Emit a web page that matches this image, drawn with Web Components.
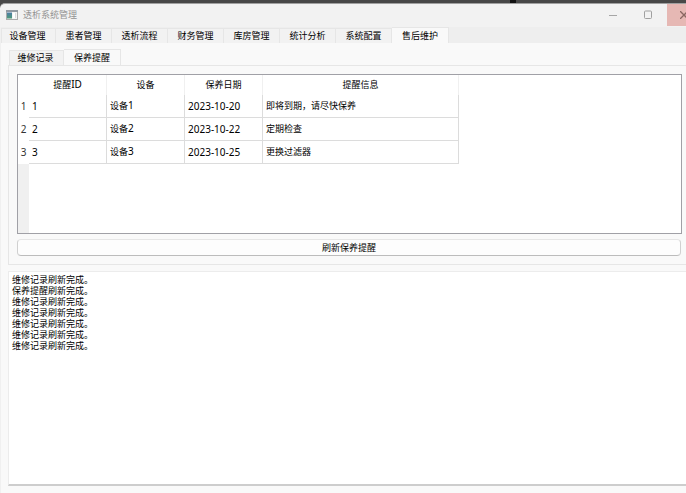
<!DOCTYPE html>
<html lang="zh-CN">
<head>
<meta charset="utf-8">
<title>透析系统管理</title>
<style>
html, body { height: 100%; margin: 0; }
body { background: #484848; overflow: hidden; font: 9px/12px "Noto Sans", "Noto Sans CJK SC", sans-serif; color: #000; }
</style>
</head>
<body>
<app-window></app-window>
<script>
function define(name, html, setup) {
  const template = document.createElement('template');
  template.innerHTML = '<style>*{box-sizing:border-box}button{font:inherit;color:inherit}</style>' + html;
  customElements.define(name, class extends HTMLElement {
    constructor() {
      super();
      this.attachShadow({ mode: 'open' }).append(template.content.cloneNode(true));
    }
    connectedCallback() { if (setup) setup(this, this.shadowRoot); }
  });
}

define('title-bar', `
<style>
:host { display: flex; height: 24px; flex: none; background: #f2f2f2; color: #929292; border-top: 1px solid #a0a0a0; border-top-left-radius: 5px; }
.name { display: flex; align-items: center; gap: 5px; padding: 0 0 2px 6px; flex: 1; font-size: 9px; }
button { border: 0; padding: 0 0 2px; background: none; width: 35px; display: flex; align-items: center; justify-content: center; }
.close { width: 19px; height: 22px; margin-left: 2px; padding: 0; background: #e6b8b4; justify-content: flex-end; overflow: hidden; }
svg { display: block; flex: none; }
</style>
<div class="name">
<svg width="12" height="10" viewBox="0 0 12 10"><defs><linearGradient id="g" x2="0" y2="1"><stop stop-color="#4c7ba5"/><stop offset="1" stop-color="#4d9a78"/></linearGradient></defs><rect x=".5" y=".5" width="11" height="9" fill="#f4f4f4" stroke="#aaa"/><path d="M0 1h12" stroke="#929aa2" stroke-width="2"/><path d="M1 2.500h5v6h-5z" fill="url(#g)"/><path d="M7 3h2v5h-2z" fill="#fff"/><path d="M9.500 3v5" stroke="#d8dce0"/></svg>
<span>透析系统管理</span></div>
<button aria-label="最小化"><svg width="8" height="8"><path d="M0 4.500h8" stroke="#a6a6a6"/></svg></button>
<button aria-label="最大化"><svg width="8" height="9"><rect x=".5" y="1" width="7" height="7.500" rx="1" fill="none" stroke="#a0a0a0"/></svg></button>
<button class="close" aria-label="关闭"><svg width="6" height="8"><path d="M0 0l8 8M8 0l-8 8" stroke="#8a6662" stroke-width="1.300"/></svg></button>
`);

define('tab-strip', `
<style>
:host { display: flex; align-items: flex-end; flex: none; height: 16px; }
</style><slot></slot>
`);

define('tab-item', `
<style>
:host { display: block; flex: 0 0 56px; height: 15px; }
:host([first]) { flex-basis: 55px; }
:host([selected]) { height: 16px; flex-basis: 57px; }
button { width: 100%; height: 100%; padding: 0; border: 1px solid #e6e6e6; border-left-width: 0; border-bottom: 0; background: #f2f2f2; text-align: center; line-height: 14px; }
:host([first]) button { border-left-width: 1px; padding-right: 2px; }
:host([selected]) button { background: #f9f9f9; }
</style><button role="tab"><slot></slot></button>
`, (host, root) => root.querySelector('button').setAttribute('aria-selected', host.hasAttribute('selected')));

define('reminder-table', `
<style>
:host { display: flex; flex-direction: column; height: 160px; background: #fff; border: 1px solid #a0a0a6; }
table { table-layout: fixed; width: 441px; border-collapse: separate; border-spacing: 0; flex: none; }
th, td { padding: 0 0 1px; font-weight: 400; height: 23px; }
thead th { height: 20px; text-align: center; border-right: 1px solid #f0f0f0; }
thead th:first-child { border: 0; }
tbody th { text-align: center; color: #333; font-size: 10px; }
td { padding-left: 3px; text-align: left; border: solid #dcdcdc; border-width: 0 1px 1px 0; }
td.num { font-size: 10px; }
.n { font-size: 10px; }
.rest { flex: 1; width: 11px; background: #f0f0f0; }
</style>
<table>
<colgroup><col style="width:11px"><col style="width:78px"><col style="width:78px"><col style="width:78px"><col style="width:196px"></colgroup>
<thead><tr><th></th><th scope="col">提醒<span class="n">ID</span></th><th scope="col">设备</th><th scope="col">保养日期</th><th scope="col">提醒信息</th></tr></thead>
<tbody></tbody></table><div class="rest"></div>
`, (host, root) => {
  root.querySelector('tbody').innerHTML = [
    ['2023-10-20', '即将到期，请尽快保养'],
    ['2023-10-22', '定期检查'],
    ['2023-10-25', '更换过滤器']
  ].map(([date, info], i) => `<tr><th scope="row">${i + 1}</th><td class="num">${i + 1}</td><td>设备<span class="n">${i + 1}</span></td><td class="num">${date}</td><td>${info}</td></tr>`).join('');
});

define('push-button', `
<style>
:host { display: block; }
button { display: block; width: 100%; height: 17px; padding: 0; border: 1px solid #d0d0d0; border-top-color: #e6e6e6; border-bottom-color: #bcbcbc; border-radius: 4px; background: #fdfdfd; line-height: 14px; }
</style><button><slot></slot></button>
`);

define('log-view', `
<style>
:host { display: flex; flex: 1; min-height: 0; }
textarea { flex: 1; width: 100%; margin: 0; padding: 2px 3px; border: 1px solid #ececec; border-right: 0; border-bottom: 2px solid #cdcdcd; border-radius: 0; background: #fff; color: #000; font: inherit; line-height: 11px; resize: none; outline: 0; overflow: hidden; }
</style><textarea readonly aria-label="日志"></textarea>
`, (host, root) => {
  root.querySelector('textarea').value = ['维修记录', '保养提醒', '维修记录', '维修记录', '维修记录', '维修记录', '维修记录'].map(t => t + '刷新完成。').join('\n');
});

define('app-window', `
<style>
:host { display: flex; flex-direction: column; height: 100%; }
.behind { flex: none; height: 3px; display: flex; justify-content: flex-end; padding-right: 170px; }
.behind i { width: 6px; background: #111; }
main { flex: 1; min-height: 0; display: flex; flex-direction: column; background: #f9f9f9; border-left: 1px solid #f0f0f0; }
.top { background: #eee; }
.page { flex: 1; min-height: 0; display: flex; flex-direction: column; padding: 6px 0 7px 7px; }
.inner { padding-left: 1px; }
.panel { display: flex; flex-direction: column; gap: 5px; padding: 8px 4px 8px 8px; margin-bottom: 6px; border: 1px solid #e6e6e6; border-right: 0; }
push-button { margin-right: 1px; }
</style>
<div class="behind"><i></i></div>
<title-bar></title-bar>
<main>
<tab-strip class="top" role="tablist"><tab-item first>设备管理</tab-item><tab-item>患者管理</tab-item><tab-item>透析流程</tab-item><tab-item>财务管理</tab-item><tab-item>库房管理</tab-item><tab-item>统计分析</tab-item><tab-item>系统配置</tab-item><tab-item selected>售后维护</tab-item></tab-strip>
<div class="page">
<tab-strip class="inner" role="tablist"><tab-item first>维修记录</tab-item><tab-item selected>保养提醒</tab-item></tab-strip>
<section class="panel"><reminder-table></reminder-table><push-button>刷新保养提醒</push-button></section>
<log-view></log-view>
</div>
</main>
`);
</script>
</body>
</html>
